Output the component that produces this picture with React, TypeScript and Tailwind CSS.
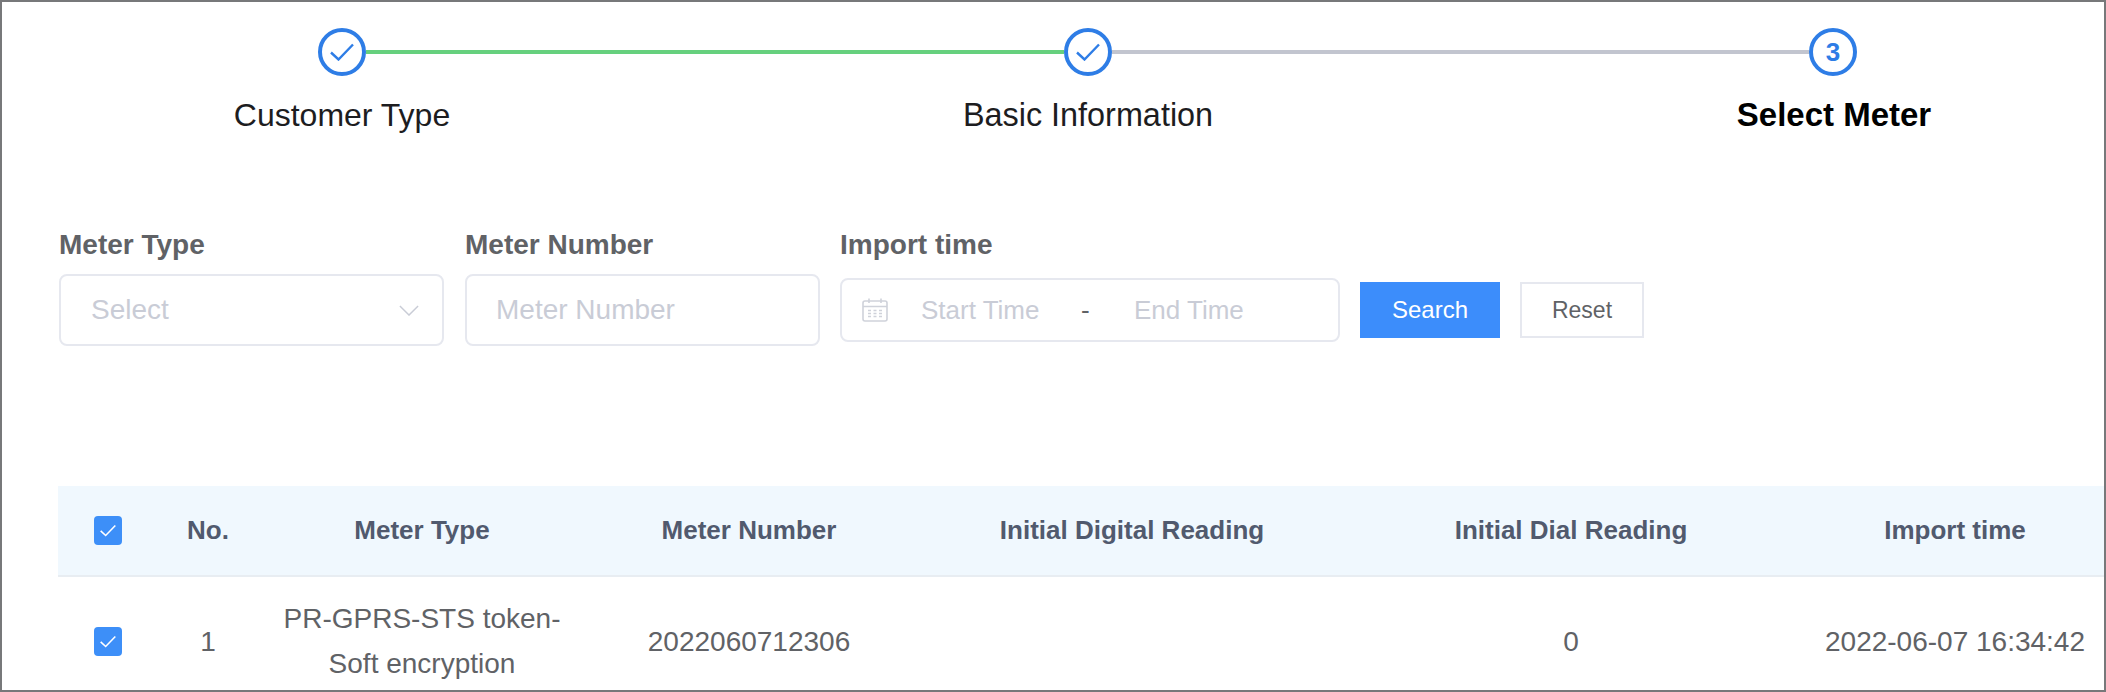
const font = { fontFamily: '"Liberation Sans", Arial, sans-serif' }

const CheckMark = ({ className }: { className: string }) => (
  <svg viewBox="0 0 24 18" fill="none" className={className} aria-hidden="true">
    <path d="M1 9.5 L8.5 16.5 L23 1.5" stroke="currentColor" strokeWidth="2.4" />
  </svg>
)

const StepCircle = ({ children }: { children: React.ReactNode }) => (
  <div className="flex h-12 w-12 shrink-0 items-center justify-center rounded-full border-[4px] border-[#2e7de6] text-[#2e7de6]">
    {children}
  </div>
)

const Checkbox = () => (
  <div className="flex h-[29px] w-[28px] items-center justify-center rounded-[4px] bg-[#3d8ff8] text-white">
    <CheckMark className="h-[13px] w-[16px]" />
  </div>
)

const CalendarIcon = () => (
  <svg viewBox="0 0 26 24" fill="none" className="h-6 w-[26px] text-[#cfd2da]" aria-hidden="true">
    <rect x="1" y="3" width="24" height="20" rx="2" stroke="currentColor" strokeWidth="1.6" />
    <path d="M1 8.5 H25 M7 0.5 V5 M19 0.5 V5" stroke="currentColor" strokeWidth="1.6" />
    <path
      d="M6 12.5 H9 M11.5 12.5 H14.5 M17 12.5 H20 M6 15.5 H9 M11.5 15.5 H14.5 M17 15.5 H20 M6 18.5 H9 M11.5 18.5 H14.5 M17 18.5 H20"
      stroke="currentColor"
      strokeWidth="1.4"
    />
  </svg>
)

const Label = ({ children }: { children: React.ReactNode }) => (
  <div className="h-[45px] text-[28px] leading-[32px] font-bold text-[#606266]">{children}</div>
)

// Same columns for the header and the body row; the last one runs past the frame
const tableCols = 'grid grid-cols-[116px_68px_360px_294px_472px_406px_362px] text-center'

export default function App() {
  return (
    <div
      className="h-[692px] w-[2106px] overflow-hidden border-2 border-[#77787a] bg-white"
      style={font}
    >
      {/* Stepper */}
      <div className="flex items-center pt-[26px] pl-[316px] pr-[247px]">
        <StepCircle>
          <CheckMark className="h-[18px] w-6" />
        </StepCircle>
        <div className="h-1 flex-1 bg-[#66d07e]" />
        <StepCircle>
          <CheckMark className="h-[18px] w-6" />
        </StepCircle>
        <div className="h-1 flex-1 bg-[#c2c5cf]" />
        <StepCircle>
          <span className="text-[26px] font-bold leading-none">3</span>
        </StepCircle>
      </div>
      <div className="ml-[-33px] mt-[21px] grid grid-cols-[746px_746px_746px] text-center text-[32.4px] leading-[36px] text-[#1d1d1f]">
        <div className="text-[32px]">Customer Type</div>
        <div>Basic Information</div>
        <div className="text-[33px] font-bold text-black">Select Meter</div>
      </div>

      {/* Filters */}
      <div className="ml-[57px] mt-[96px] flex items-start">
        <div className="w-[385px]">
          <Label>Meter Type</Label>
          <div className="flex h-[72px] items-center justify-between rounded-lg border-2 border-[#e6e8ef] pl-[30px] pr-[23px] text-[28px] text-[#c9ccd6]">
            <span>Select</span>
            <svg viewBox="0 0 22 12" fill="none" className="h-[11px] w-[20px]" aria-hidden="true">
              <path d="M1 1 L11 11 L21 1" stroke="currentColor" strokeWidth="1.6" />
            </svg>
          </div>
        </div>
        <div className="ml-[21px] w-[355px]">
          <Label>Meter Number</Label>
          <div className="flex h-[72px] items-center rounded-lg border-2 border-[#e6e8ef] pl-[29px] text-[28px] text-[#c9ccd6]">
            Meter Number
          </div>
        </div>
        <div className="ml-[20px] w-[500px]">
          <Label>Import time</Label>
          <div className="mt-[4px] flex h-[64px] items-center rounded-lg border-2 border-[#e6e8ef] pl-[20px] text-[26px] text-[#c9ccd6]">
            <CalendarIcon />
            <span className="ml-[33px] w-[160px]">Start Time</span>
            <span className="w-[53px] text-[#606266]">-</span>
            <span>End Time</span>
          </div>
        </div>
        <button className="ml-[20px] mt-[53px] h-[56px] w-[140px] bg-[#3c8dfb] text-[24px] text-white">
          Search
        </button>
        <button className="ml-[20px] mt-[53px] h-[56px] w-[124px] border-2 border-[#e6e8ef] text-[23px] text-[#606266]">
          Reset
        </button>
      </div>

      {/* Table */}
      <div className="ml-[56px] mt-[140px]">
        <div className={`${tableCols} h-[91px] items-center border-b-2 border-[#e8edf2] bg-[#f0f8fe] text-[26px] font-bold text-[#515a6e]`}>
          <div className="pl-[36px]">
            <Checkbox />
          </div>
          <div>No.</div>
          <div>Meter Type</div>
          <div>Meter Number</div>
          <div>Initial Digital Reading</div>
          <div>Initial Dial Reading</div>
          <div>Import time</div>
        </div>
        <div className={`${tableCols} items-center pt-[19px] text-[28px] leading-[45px] text-[#606266]`}>
          <div className="pl-[36px]">
            <Checkbox />
          </div>
          <div>1</div>
          <div className="px-[30px]">PR-GPRS-STS token-Soft encryption</div>
          <div>2022060712306</div>
          <div />
          <div>0</div>
          <div>2022-06-07 16:34:42</div>
        </div>
      </div>
    </div>
  )
}
